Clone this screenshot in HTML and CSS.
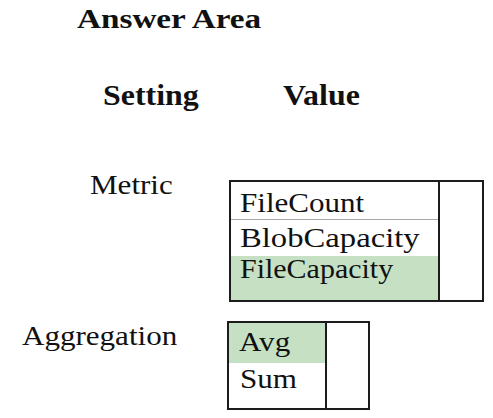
FILE: index.html
```html
<!DOCTYPE html>
<html lang="en">
<head>
<meta charset="utf-8">
<title>Answer Area</title>
<link rel="stylesheet" href="styles.css">
</head>
<body>
<main class="answer">
  <h1 class="answer__title"><span class="wide wide--title">Answer Area</span></h1>

  <div class="answer__head">
    <span class="answer__col answer__col--setting"><span class="wide wide--head">Setting</span></span>
    <span class="answer__col answer__col--value"><span class="wide wide--head">Value</span></span>
  </div>

  <div class="setting setting--metric">
    <span class="setting__label"><span class="wide">Metric</span></span>
    <div class="picker picker--metric">
      <ul class="picker__list">
        <li class="picker__item picker__item--first"><span class="wide">FileCount</span></li>
        <li class="picker__item picker__item--second"><span class="wide wide--long">BlobCapacity</span></li>
        <li class="picker__item picker__item--third picker__item--chosen"><span class="wide wide--short">FileCapacity</span></li>
      </ul>
      <div class="picker__handle"></div>
    </div>
  </div>

  <div class="setting setting--aggregation">
    <span class="setting__label"><span class="wide">Aggregation</span></span>
    <div class="picker picker--aggregation">
      <ul class="picker__list">
        <li class="picker__item picker__item--avg picker__item--chosen"><span class="wide">Avg</span></li>
        <li class="picker__item picker__item--sum"><span class="wide">Sum</span></li>
      </ul>
      <div class="picker__handle"></div>
    </div>
  </div>
</main>
</body>
</html>
```

FILE: styles.css
```css
html, body {
  margin: 0;
  padding: 0;
  background: #ffffff;
}

.answer {
  padding-top: 5px;
  font-family: "Liberation Serif", "Times New Roman", serif;
  color: #111111;
}

/* the exam font is set wide: stretch glyphs horizontally */
.wide {
  display: inline-block;
  transform: scaleX(1.15);
  transform-origin: 0 0;
  white-space: nowrap;
}

.wide--title {
  transform: scaleX(1.23);
}

.wide--head {
  transform: scaleX(1.1);
}

.wide--long {
  transform: scaleX(1.21);
}

.wide--short {
  transform: scaleX(1.11);
}

/* heading */
.answer__title {
  margin: 0 0 0 77px;
  font-size: 27px;
  line-height: 28px;
  font-weight: bold;
}

/* column captions */
.answer__head {
  display: flex;
  margin-top: 48px;
  font-size: 29px;
  line-height: 29px;
  font-weight: bold;
}

.answer__col--setting {
  margin-left: 103px;
}

.answer__col--value {
  margin-left: 93px;
}

/* one setting row: label + drop-down box */
.setting {
  display: grid;
  grid-template-columns: 227px auto;
  align-items: start;
}

.setting__label {
  font-size: 27px;
  line-height: 27px;
}

.setting--metric {
  margin-top: 62px;
}

.setting--metric .setting__label {
  padding-left: 90px;
}

.setting--metric .picker {
  margin-top: 8px;
  margin-left: 2px;
}

.setting--aggregation {
  margin-top: 19px;
}

.setting--aggregation .setting__label {
  padding-left: 22px;
  margin-top: 2px;
}

/* drop-down box */
.picker {
  display: flex;
  border: 2px solid #1c1c1c;
  justify-self: start;
}

.picker__list {
  list-style: none;
  margin: 0;
  padding: 0;
  border-right: 2px solid #1c1c1c;
}

.picker__item {
  box-sizing: border-box;
  padding-left: 9px;
  font-size: 27px;
  line-height: 27px;
}

.picker__item--chosen {
  background: #c5e0c3;
}

.picker--metric .picker__list {
  width: 207px;
}

.picker--metric .picker__handle {
  width: 42px;
}

.picker__item--first {
  height: 38px;
  padding-top: 8px;
  border-bottom: 1px solid #a8a8a8;
}

.picker__item--second {
  height: 36px;
  padding-top: 5px;
}

.picker__item--third {
  height: 44px;
  padding-top: 0;
}

.picker--aggregation .picker__list {
  width: 96px;
}

.picker--aggregation .picker__handle {
  width: 41px;
}

.picker__item--avg {
  height: 40px;
  padding-top: 6px;
  padding-left: 10px;
}

.picker__item--sum {
  height: 45px;
  padding-top: 3px;
  padding-left: 11px;
}
```
